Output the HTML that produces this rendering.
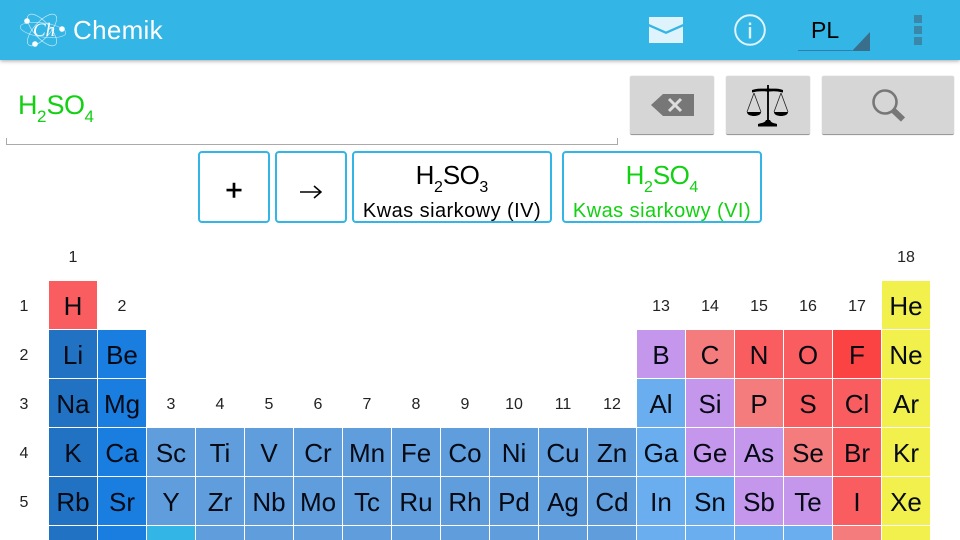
<!DOCTYPE html>
<html lang="pl"><head><meta charset="utf-8"><title>Chemik</title>
<style>
html,body{margin:0;padding:0}
html{width:960px;height:540px;overflow:hidden}
body{width:960px;height:540px;overflow:hidden;background:#fff;position:relative;font-family:"Liberation Sans",sans-serif;color:#000}
#bar{position:absolute;left:0;top:0;width:960px;height:60px;background:#33b5e5;box-shadow:0 1px 4px rgba(0,0,0,.35)}
.a{position:absolute}
.btn{position:absolute;top:76px;height:58px;background:#d6d6d6;border-radius:2px;border-bottom:1px solid #999;box-shadow:0 0 1px #bbb}
.chip{position:absolute;top:151px;height:68px;border:2px solid #33b5e5;border-radius:4px;text-align:center;background:#fff}
.f{position:absolute;left:0;right:0;top:7px;font-size:26px;line-height:30px;height:30px;letter-spacing:-.5px}
.n{position:absolute;left:0;right:0;top:47px;font-size:20px;line-height:22px;white-space:nowrap;letter-spacing:.45px}
sub{font-size:16px;line-height:0;vertical-align:-8px;letter-spacing:0}
.g{color:#12d012}
#t{position:absolute;left:0;top:0;width:960px;height:540px;overflow:hidden}
#t b{position:absolute;width:48px;height:48px;overflow:hidden;font-weight:400;font-size:26px;line-height:50px;text-align:center;color:#050a14}
#t b.s{height:14px}
#t i{position:absolute;width:48px;font-style:normal;font-size:16px;line-height:20px;text-align:center;color:#222}
.d{background:#2272c3}.e{background:#1a7de0}.m{background:#5f9ddc}.p{background:#6aaef0}.v{background:#c497ec}.k{background:#f47c7c}.r{background:#f95d5f}.y{background:#f2f04c}.l{background:#33b5e5}
</style></head><body>
<div id="bar"></div>
<svg class="a" style="left:20px;top:10px" width="46" height="40" viewBox="0 0 46 40" fill="none" stroke="#fff" stroke-width=".7">
<ellipse cx="23" cy="20" rx="23" ry="7" transform="rotate(8 23 20)" opacity=".6"/>
<ellipse cx="22" cy="20" rx="20" ry="8" transform="rotate(-48 22 20)" opacity=".7"/>
<ellipse cx="22" cy="20" rx="20" ry="8" transform="rotate(48 22 20)" opacity=".7"/>
<circle cx="7" cy="11" r="2.8" fill="#fff" stroke="none"/><circle cx="42" cy="19" r="2.8" fill="#fff" stroke="none"/><circle cx="15" cy="34" r="2.8" fill="#fff" stroke="none"/>
<text x="13" y="26" font-family="Liberation Serif" font-style="italic" font-size="19" fill="#fff" stroke="none">Ch</text>
</svg>
<div class="a" style="left:73px;top:14px;font-size:26px;line-height:32px;color:#fff;letter-spacing:.3px">Chemik</div>
<svg class="a" style="left:649px;top:17px" width="34" height="26" viewBox="0 0 34 26"><path fill="#def3fb" d="M0 0H34V7L17 14.5L0 7ZM0 9.500L17 17L34 9.500V26H0Z"/></svg>
<svg class="a" style="left:733px;top:14px" width="33" height="33" viewBox="0 0 33 33"><circle cx="17" cy="16" r="14.8" fill="none" stroke="#def3fb" stroke-width="2"/><rect x="15.800" y="13" width="2.400" height="11.500" fill="#def3fb"/><rect x="15.800" y="8.500" width="2.400" height="2.600" fill="#def3fb"/></svg>
<div class="a" style="left:811px;top:17px;font-size:23px;line-height:26px;color:#000">PL</div>
<div class="a" style="left:798px;top:50px;width:54px;height:1px;background:#2f7fa8"></div>
<svg class="a" style="left:852px;top:32px" width="18" height="19"><path d="M18 0V19H0Z" fill="#3a6f8c"/></svg>
<div class="a" style="left:914px;top:15px;width:8px;height:8px;background:#3a87a9"></div>
<div class="a" style="left:914px;top:26px;width:8px;height:8px;background:#3a87a9"></div>
<div class="a" style="left:914px;top:37px;width:8px;height:8px;background:#3a87a9"></div>

<div class="a g" style="left:18px;top:89px;font-size:27px;line-height:32px;letter-spacing:-.5px">H<sub style="font-size:17px">2</sub>SO<sub style="font-size:17px">4</sub></div>
<svg class="a" style="left:6px;top:138px" width="612" height="7"><path d="M.5 0V6.500H611.500V0" fill="none" stroke="#aaa"/></svg>

<div class="btn" style="left:630px;width:84px"></div>
<svg class="a" style="left:651px;top:94px" width="43" height="22" viewBox="0 0 43 22"><path fill="#777" d="M0 11L12 0H43V22H12Z"/><path d="M18 5L30 17M30 5L18 17" stroke="#ddd" stroke-width="3"/></svg>
<div class="btn" style="left:726px;width:84px"></div>
<svg class="a" style="left:745px;top:83px" width="44" height="45" viewBox="0 0 44 45"><path d="M22 2h2v36h-2z" fill="#111"/><path d="M7 7C13 5 18 6 23 5.500C28 6 33 5 38 7V9.500C32 8 28 8 24.500 8.500H21.500C18 8 12 8 7 9.500Z" fill="#000"/><path d="M9 10L2 29M9 10L16 29M36 10L29 29M36 10L43 29" stroke="#222" stroke-width=".8" fill="none"/><path d="M2 29H16C16 32 12 33 9 33C6 33 2 32 2 29ZM29 29H43C43 32 39 33 36 33C33 33 29 32 29 29Z" fill="#000"/><path d="M21 37H25C26 40 29 40 32 41V43.500H13V41C16 40 20 40 21 37Z" fill="#000"/></svg>
<div class="btn" style="left:822px;width:132px"></div>
<svg class="a" style="left:871px;top:88px" width="36" height="36" viewBox="0 0 36 36"><circle cx="14" cy="14" r="11.500" fill="none" stroke="#777" stroke-width="2.600"/><path d="M22.500 22.500L32 31.500" stroke="#777" stroke-width="6"/></svg>

<div class="chip" style="left:198px;width:68px"><div style="font-size:30px;line-height:76px;font-weight:400;height:68px;-webkit-text-stroke:.5px #000">+</div></div>
<div class="chip" style="left:275px;width:68px"><svg class="a" style="left:22px;top:31px" width="24" height="16"><path d="M1 8H22M15 2L22 8L15 14" fill="none" stroke="#000" stroke-width="1.500"/></svg></div>
<div class="chip" style="left:352px;width:196px"><div class="f">H<sub>2</sub>SO<sub>3</sub></div><div class="n">Kwas siarkowy (IV)</div></div>
<div class="chip g" style="left:562px;width:196px"><div class="f">H<sub>2</sub>SO<sub>4</sub></div><div class="n">Kwas siarkowy (VI)</div></div>

<div id="t">
<i style="left:49px;top:248px">1</i><i style="left:882px;top:248px">18</i>
<i style="left:0;top:297px">1</i><i style="left:0;top:346px">2</i><i style="left:0;top:395px">3</i><i style="left:0;top:444px">4</i><i style="left:0;top:493px">5</i>
<i style="left:98px;top:297px">2</i>
<i style="left:637px;top:297px">13</i><i style="left:686px;top:297px">14</i><i style="left:735px;top:297px">15</i><i style="left:784px;top:297px">16</i><i style="left:833px;top:297px">17</i>
<i style="left:147px;top:395px">3</i><i style="left:196px;top:395px">4</i><i style="left:245px;top:395px">5</i><i style="left:294px;top:395px">6</i><i style="left:343px;top:395px">7</i><i style="left:392px;top:395px">8</i><i style="left:441px;top:395px">9</i><i style="left:490px;top:395px">10</i><i style="left:539px;top:395px">11</i><i style="left:588px;top:395px">12</i>

<b class="r" style="left:49px;top:281px">H</b><b class="y" style="left:882px;top:281px">He</b>

<b class="d" style="left:49px;top:330px">Li</b><b class="e" style="left:98px;top:330px">Be</b>
<b class="v" style="left:637px;top:330px">B</b><b class="k" style="left:686px;top:330px">C</b><b class="r" style="left:735px;top:330px">N</b><b class="r" style="left:784px;top:330px">O</b><b style="left:833px;top:330px;background:#fc4343">F</b><b class="y" style="left:882px;top:330px">Ne</b>

<b class="d" style="left:49px;top:379px">Na</b><b class="e" style="left:98px;top:379px">Mg</b>
<b class="p" style="left:637px;top:379px">Al</b><b class="v" style="left:686px;top:379px">Si</b><b class="k" style="left:735px;top:379px">P</b><b class="r" style="left:784px;top:379px">S</b><b class="r" style="left:833px;top:379px">Cl</b><b class="y" style="left:882px;top:379px">Ar</b>

<b class="d" style="left:49px;top:428px">K</b><b class="e" style="left:98px;top:428px">Ca</b><b class="m" style="left:147px;top:428px">Sc</b><b class="m" style="left:196px;top:428px">Ti</b><b class="m" style="left:245px;top:428px">V</b><b class="m" style="left:294px;top:428px">Cr</b><b class="m" style="left:343px;top:428px">Mn</b><b class="m" style="left:392px;top:428px">Fe</b><b class="m" style="left:441px;top:428px">Co</b><b class="m" style="left:490px;top:428px">Ni</b><b class="m" style="left:539px;top:428px">Cu</b><b class="m" style="left:588px;top:428px">Zn</b>
<b class="p" style="left:637px;top:428px">Ga</b><b class="v" style="left:686px;top:428px">Ge</b><b class="v" style="left:735px;top:428px">As</b><b class="k" style="left:784px;top:428px">Se</b><b class="r" style="left:833px;top:428px">Br</b><b class="y" style="left:882px;top:428px">Kr</b>

<b class="d" style="left:49px;top:477px">Rb</b><b class="e" style="left:98px;top:477px">Sr</b><b class="m" style="left:147px;top:477px">Y</b><b class="m" style="left:196px;top:477px">Zr</b><b class="m" style="left:245px;top:477px">Nb</b><b class="m" style="left:294px;top:477px">Mo</b><b class="m" style="left:343px;top:477px">Tc</b><b class="m" style="left:392px;top:477px">Ru</b><b class="m" style="left:441px;top:477px">Rh</b><b class="m" style="left:490px;top:477px">Pd</b><b class="m" style="left:539px;top:477px">Ag</b><b class="m" style="left:588px;top:477px">Cd</b>
<b class="p" style="left:637px;top:477px">In</b><b class="p" style="left:686px;top:477px">Sn</b><b class="v" style="left:735px;top:477px">Sb</b><b class="v" style="left:784px;top:477px">Te</b><b class="r" style="left:833px;top:477px">I</b><b class="y" style="left:882px;top:477px">Xe</b>

<b class="d s" style="left:49px;top:526px">Cs</b><b class="e s" style="left:98px;top:526px">Ba</b><b class="l s" style="left:147px;top:526px"></b><b class="m s" style="left:196px;top:526px">Hf</b><b class="m s" style="left:245px;top:526px">Ta</b><b class="m s" style="left:294px;top:526px">W</b><b class="m s" style="left:343px;top:526px">Re</b><b class="m s" style="left:392px;top:526px">Os</b><b class="m s" style="left:441px;top:526px">Ir</b><b class="m s" style="left:490px;top:526px">Pt</b><b class="m s" style="left:539px;top:526px">Au</b><b class="m s" style="left:588px;top:526px">Hg</b>
<b class="p s" style="left:637px;top:526px">Tl</b><b class="p s" style="left:686px;top:526px">Pb</b><b class="p s" style="left:735px;top:526px">Bi</b><b class="p s" style="left:784px;top:526px">Po</b><b class="k s" style="left:833px;top:526px">At</b><b class="y s" style="left:882px;top:526px">Rn</b>
</div>
</body></html>
